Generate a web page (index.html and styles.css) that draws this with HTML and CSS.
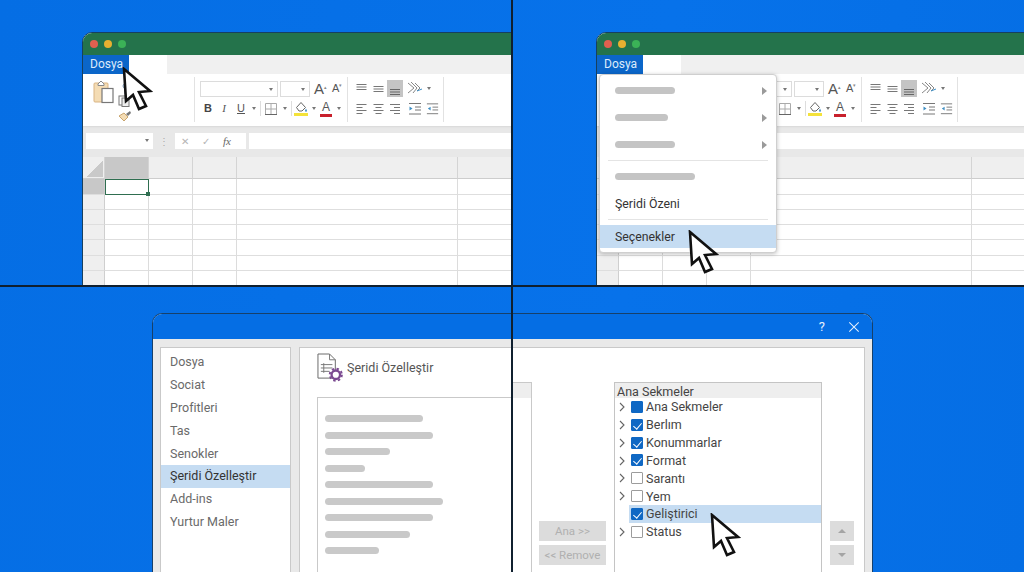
FILE: index.html
```html
<!DOCTYPE html>
<html lang="tr">
<head>
  <meta charset="UTF-8">
  <title>Geliştirici sekmesini açma</title>
  <meta name="viewport" content="width=device-width, initial-scale=1.0" />
  <link rel="stylesheet" href="styles.css">
</head>
<body>

  <svg class="defs" aria-hidden="true">
    <symbol id="cursor" viewBox="0 0 32 46">
      <path d="M3 2 L5 34 L12 28 L18 42 L25 39 L18 25 L29 24 Z" fill="#fff" stroke="#111" stroke-width="2.6" stroke-linejoin="miter"/>
    </symbol>
    <symbol id="v-top" viewBox="0 0 16 16"><path d="M3 3.5h10M3 6h10M3 8.5h10" stroke="#777" fill="none"/></symbol>
    <symbol id="v-mid" viewBox="0 0 16 16"><path d="M3 5.5h10M3 8h10M3 10.5h10" stroke="#777" fill="none"/></symbol>
    <symbol id="v-bot" viewBox="0 0 16 16"><path d="M3 8.5h10M3 11h10M3 13.5h10" stroke="#666" fill="none"/></symbol>
    <symbol id="a-left" viewBox="0 0 16 16"><path d="M3 3.5h10M3 6.5h6M3 9.5h10M3 12.5h6" stroke="#777" fill="none"/></symbol>
    <symbol id="a-mid" viewBox="0 0 16 16"><path d="M3 3.5h10M5 6.5h6M3 9.5h10M5 12.5h6" stroke="#777" fill="none"/></symbol>
    <symbol id="a-right" viewBox="0 0 16 16"><path d="M3 3.5h10M7 6.5h6M3 9.5h10M7 12.5h6" stroke="#777" fill="none"/></symbol>
    <symbol id="ind-out" viewBox="0 0 16 16"><path d="M2 2.5h12M8 6h6M8 9h6M2 13h12" stroke="#777" fill="none"/><path d="M2.5 5.5l3 2-3 2z" fill="#3f8fc4"/></symbol>
    <symbol id="ind-in" viewBox="0 0 16 16"><path d="M2 2.5h12M8 6h6M8 9h6M2 13h12" stroke="#777" fill="none"/><path d="M6 5.5l-3 2 3 2z" fill="#3f8fc4"/></symbol>
    <symbol id="orient" viewBox="0 0 18 16"><path d="M2 2l6 5-6 5M5 1l6 6-4 5M9 2l5 5-3 3" stroke="#888" fill="none"/><path d="M11 10l5-2" stroke="#3f8fc4" fill="none"/></symbol>
    <symbol id="borders" viewBox="0 0 16 16"><path d="M2.5 2.5h11v11h-11zM8 2.5v11M2.5 8h11" stroke="#aaa" fill="none"/><path d="M2 13.5h12" stroke="#666" fill="none"/></symbol>
    <symbol id="fill" viewBox="0 0 16 16"><path d="M8 1.5l4.5 5-3.5 3.5h-3L3.5 6.5z" fill="#fff" stroke="#666"/><path d="M13 7.5l1 2.2a1 1 0 1 1-2 0z" fill="#3f8fc4"/><rect x="1" y="12" width="14" height="3" fill="#f4e23a"/></symbol>
    <symbol id="clip" viewBox="0 0 22 24">
      <rect x="1" y="3" width="14" height="19" rx="1" fill="#f4dcb4" stroke="#d9b483"/>
      <path d="M5 4 L8 1 L11 4 V5.5 H5 Z" fill="#fff" stroke="#888"/>
      <rect x="9" y="8.5" width="11" height="14" fill="#fff" stroke="#777" stroke-width="1.2"/>
    </symbol>
    <symbol id="copy" viewBox="0 0 12 12"><rect x="1" y="1" width="7" height="9" fill="#fff" stroke="#777"/><rect x="4" y="3" width="7" height="8.5" fill="#eee" stroke="#777"/></symbol>
    <symbol id="scissors" viewBox="0 0 10 12"><circle cx="5" cy="3" r="2" fill="none" stroke="#7a98b8"/><path d="M5 5v6" stroke="#7a98b8"/></symbol>
    <symbol id="brush" viewBox="0 0 14 12"><path d="M1 6l5-3 4 4-4 4z" fill="#f4dcb4" stroke="#c9a56e"/><path d="M8 4l4-3 1 2-3 3z" fill="#777"/></symbol>
    <symbol id="chev" viewBox="0 0 8 12"><path d="M2 2l4 4-4 4" fill="none" stroke="#666" stroke-width="1.1"/></symbol>
  </svg>

  <main class="stage">
    <div class="top-row">

      <section class="pane">
        <div class="window">
          <div class="titlebar"><i class="dot red"></i><i class="dot yellow"></i><i class="dot green"></i></div>
          <div class="tabs"><span class="tab-file">Dosya</span><span class="tab-home"></span></div>
          <div class="ribbon">
            <div class="group group-clip">
              <svg class="ic-clip"><use href="#clip"/></svg>
              <div class="clip-small">
                <svg class="ic-s"><use href="#scissors"/></svg>
                <svg class="ic-c"><use href="#copy"/></svg>
                <svg class="ic-b"><use href="#brush"/></svg>
              </div>
            </div>
            <div class="group group-font">
              <div class="rb-row">
                <span class="combo combo-font"><i class="caret"></i></span>
                <span class="combo combo-size"><i class="caret"></i></span>
                <span class="grow-a">A<sup>▴</sup></span>
                <span class="shrink-a">A<sup>▾</sup></span>
              </div>
              <div class="rb-row">
                <span class="tb tb-b">B</span>
                <span class="tb tb-i">I</span>
                <span class="tb tb-u">U</span>
                <i class="caret cell"></i>
                <i class="rb-sep"></i>
                <svg class="ic w20"><use href="#borders"/></svg>
                <i class="caret cell"></i>
                <i class="rb-sep"></i>
                <svg class="ic w18"><use href="#fill"/></svg>
                <i class="caret cell"></i>
                <span class="tb tb-color">A</span>
                <i class="caret cell"></i>
              </div>
            </div>
            <div class="group group-align">
              <div class="rb-row">
                <svg class="ic w17"><use href="#v-top"/></svg>
                <svg class="ic w17"><use href="#v-mid"/></svg>
                <span class="sel-icon"><svg class="ic w16"><use href="#v-bot"/></svg></span>
                <svg class="ic w20 gap"><use href="#orient"/></svg>
                <i class="caret cell"></i>
              </div>
              <div class="rb-row">
                <svg class="ic w17"><use href="#a-left"/></svg>
                <svg class="ic w17"><use href="#a-mid"/></svg>
                <svg class="ic w16"><use href="#a-right"/></svg>
                <svg class="ic w20 gap"><use href="#ind-out"/></svg>
                <svg class="ic w15"><use href="#ind-in"/></svg>
              </div>
            </div>
          </div>
          <div class="formula">
            <span class="namebox"><i class="caret"></i></span>
            <span class="grip">⋮</span>
            <span class="fxbox"><span class="fx-x">✕</span><span class="fx-ok">✓</span><span class="fx">fx</span></span>
            <span class="fxinput"></span>
          </div>
          <table class="sheet">
            <tr class="head"><th class="corner"></th><th class="on"></th><th></th><th></th><th></th><th></th></tr>
            <tr class="tall"><th class="on"></th><td class="active"></td><td></td><td></td><td></td><td></td></tr>
            <tr><th></th><td></td><td></td><td></td><td></td><td></td></tr>
            <tr><th></th><td></td><td></td><td></td><td></td><td></td></tr>
            <tr><th></th><td></td><td></td><td></td><td></td><td></td></tr>
            <tr class="tall"><th></th><td></td><td></td><td></td><td></td><td></td></tr>
            <tr><th></th><td></td><td></td><td></td><td></td><td></td></tr>
            <tr><th></th><td></td><td></td><td></td><td></td><td></td></tr>
          </table>
        </div>
        <svg class="cursor cursor-1"><use href="#cursor"/></svg>
      </section>

      <section class="pane pane-right">
        <div class="window">
          <div class="titlebar"><i class="dot red"></i><i class="dot yellow"></i><i class="dot green"></i></div>
          <div class="tabs"><span class="tab-file">Dosya</span><span class="tab-home"></span></div>
          <div class="ribbon">
            <div class="group group-clip"></div>
            <div class="group group-font">
              <div class="rb-row">
                <span class="combo combo-font"><i class="caret"></i></span>
                <span class="combo combo-size"><i class="caret"></i></span>
                <span class="grow-a">A<sup>▴</sup></span>
                <span class="shrink-a">A<sup>▾</sup></span>
              </div>
              <div class="rb-row">
                <span class="tb tb-b">B</span>
                <span class="tb tb-i">I</span>
                <span class="tb tb-u">U</span>
                <i class="caret cell"></i>
                <i class="rb-sep"></i>
                <svg class="ic w20"><use href="#borders"/></svg>
                <i class="caret cell"></i>
                <i class="rb-sep"></i>
                <svg class="ic w18"><use href="#fill"/></svg>
                <i class="caret cell"></i>
                <span class="tb tb-color">A</span>
                <i class="caret cell"></i>
              </div>
            </div>
            <div class="group group-align">
              <div class="rb-row">
                <svg class="ic w17"><use href="#v-top"/></svg>
                <svg class="ic w17"><use href="#v-mid"/></svg>
                <span class="sel-icon"><svg class="ic w16"><use href="#v-bot"/></svg></span>
                <svg class="ic w20 gap"><use href="#orient"/></svg>
                <i class="caret cell"></i>
              </div>
              <div class="rb-row">
                <svg class="ic w17"><use href="#a-left"/></svg>
                <svg class="ic w17"><use href="#a-mid"/></svg>
                <svg class="ic w16"><use href="#a-right"/></svg>
                <svg class="ic w20 gap"><use href="#ind-out"/></svg>
                <svg class="ic w15"><use href="#ind-in"/></svg>
              </div>
            </div>
          </div>
          <div class="formula">
            <span class="namebox"></span>
            <span class="fxinput"></span>
          </div>
          <table class="sheet">
            <tr class="head"><th class="corner"></th><th></th><th></th><th></th><th></th><th></th></tr>
            <tr class="tall"><th></th><td></td><td></td><td></td><td></td><td></td></tr>
            <tr><th></th><td></td><td></td><td></td><td></td><td></td></tr>
            <tr><th></th><td></td><td></td><td></td><td></td><td></td></tr>
            <tr><th></th><td></td><td></td><td></td><td></td><td></td></tr>
            <tr class="tall"><th></th><td></td><td></td><td></td><td></td><td></td></tr>
            <tr><th></th><td></td><td></td><td></td><td></td><td></td></tr>
            <tr><th></th><td></td><td></td><td></td><td></td><td></td></tr>
          </table>
        </div>

        <div class="menu">
          <div class="menu-item"><i class="bar w60"></i><i class="arrow"></i></div>
          <div class="menu-item"><i class="bar w53"></i><i class="arrow"></i></div>
          <div class="menu-item"><i class="bar w60"></i><i class="arrow"></i></div>
          <hr class="menu-sep">
          <div class="menu-item"><i class="bar w80"></i></div>
          <div class="menu-item menu-text">Şeridi Özeni</div>
          <hr class="menu-sep">
          <div class="menu-item menu-text menu-on">Seçenekler</div>
        </div>
        <svg class="cursor cursor-2"><use href="#cursor"/></svg>
      </section>
    </div>

    <section class="bottom-row">
      <div class="dialog">
        <div class="dialog-title">
          <span class="help">?</span>
          <svg class="close" viewBox="0 0 14 14"><path d="M1.5 1.5l11 11M12.5 1.5l-11 11" stroke="#e6f0fc" stroke-width="1.2" fill="none"/></svg>
        </div>
        <div class="dialog-body">
          <ul class="cats">
            <li>Dosya</li>
            <li>Sociat</li>
            <li>Profitleri</li>
            <li>Tas</li>
            <li>Senokler</li>
            <li class="on">Şeridi Özelleştir</li>
            <li>Add-ins</li>
            <li>Yurtur Maler</li>
          </ul>
          <div class="panel">
            <div class="panel-head">
              <svg class="panel-icon" viewBox="0 0 28 30">
                <path d="M1 1h12l6 6v19H1z" fill="#fff" stroke="#666"/>
                <path d="M13 1v6h6M4 12h12M4 15.5h12M4 19h9M7 10.5v10" stroke="#777" fill="none"/>
                <circle cx="19.5" cy="22.5" r="4.4" fill="#fff" stroke="#7b4a91" stroke-width="2.4"/>
                <circle cx="19.5" cy="22.5" r="6.3" fill="none" stroke="#7b4a91" stroke-width="2" stroke-dasharray="2.5 2.45"/>
              </svg>
              <span>Şeridi Özelleştir</span>
            </div>
            <div class="columns">
              <div class="left-list">
                <div class="left-box">
                  <i class="line l98"></i>
                  <i class="line l108"></i>
                  <i class="line l65"></i>
                  <i class="line l40"></i>
                  <i class="line l108"></i>
                  <i class="line l118"></i>
                  <i class="line l108"></i>
                  <i class="line l85"></i>
                  <i class="line l54"></i>
                </div>
                <div class="left-tail"><div class="tail-head"></div></div>
              </div>
              <div class="move-btns">
                <button class="btn" type="button">Ana &gt;&gt;</button>
                <button class="btn" type="button">&lt;&lt; Remove</button>
              </div>
              <div class="tree">
                <div class="tree-head">Ana Sekmeler</div>
                <div class="tree-row"><svg class="chev"><use href="#chev"/></svg><i class="cb solid"></i>Ana Sekmeler</div>
                <div class="tree-row"><svg class="chev"><use href="#chev"/></svg><i class="cb on"></i>Berlım</div>
                <div class="tree-row"><svg class="chev"><use href="#chev"/></svg><i class="cb on"></i>Konummarlar</div>
                <div class="tree-row"><svg class="chev"><use href="#chev"/></svg><i class="cb on"></i>Format</div>
                <div class="tree-row"><svg class="chev"><use href="#chev"/></svg><i class="cb"></i>Sarantı</div>
                <div class="tree-row"><svg class="chev"><use href="#chev"/></svg><i class="cb"></i>Yem</div>
                <div class="tree-row tree-on"><i class="cb on"></i>Geliştirici</div>
                <div class="tree-row"><svg class="chev"><use href="#chev"/></svg><i class="cb"></i>Status</div>
              </div>
              <div class="order-btns">
                <button class="btn-sq" type="button"><i class="tri-up"></i></button>
                <button class="btn-sq" type="button"><i class="tri-down"></i></button>
              </div>
            </div>
          </div>
        </div>
      </div>
      <svg class="cursor cursor-3"><use href="#cursor"/></svg>
    </section>

    <div class="divider"></div>
  </main>

</body>
</html>
```

FILE: styles.css
```css
* {
  box-sizing: border-box;
}

body {
  margin: 0;
  font-family: Roboto, 'Noto Sans', sans-serif;
  background-color: #056fe6;
  overflow: hidden;
}

i {
  display: block;
  font-style: normal;
}

.defs {
  display: none;
}

.stage {
  position: relative;
  width: 1024px;
  height: 572px;
  overflow: hidden;
  background: linear-gradient(100deg, #056ee4, #0772ea 60%, #056ee4);
}

.divider {
  position: absolute;
  left: 511px;
  top: 0;
  width: 2px;
  height: 572px;
  background: #10202f;
}

.top-row {
  display: flex;
  height: 287px;
  border-bottom: 2px solid #10202f;
}

.pane {
  position: relative;
  width: 513px;
  padding: 32px 0 0 82px;
  overflow: hidden;
}

.pane-right {
  width: 511px;
  padding-left: 83px;
}

/* excel window */
.window {
  width: 640px;
  height: 300px;
  background: #fff;
  border: 1.5px solid #17405f;
  border-radius: 10px 10px 0 0;
  overflow: hidden;
}

.titlebar {
  display: flex;
  align-items: center;
  gap: 6px;
  height: 22px;
  padding-left: 7px;
  background-color: #24734b;
}

.dot {
  width: 8px;
  height: 8px;
  border-radius: 50%;
}

.red { background-color: #e0604f; }
.yellow { background-color: #e8b030; }
.green { background-color: #3bb257; }

.tabs {
  display: flex;
  height: 19px;
  background-color: #f0f0f0;
}

.tab-file {
  width: 46px;
  padding: 1px 0 0 7px;
  font-size: 12px;
  line-height: 17px;
  color: #dcebfb;
  background-color: #0b66c9;
}

.tab-home {
  width: 38px;
  background-color: #fff;
}

.ribbon {
  display: flex;
  height: 52px;
  padding: 3px 0 4px;
  background-color: #fff;
}

.group {
  padding-top: 3px;
  border-right: 1px solid #e2e2e2;
}

.group-clip {
  position: relative;
  width: 112px;
  flex: none;
}

.ic-clip {
  display: block;
  width: 22px;
  height: 24px;
  margin: 0 0 0 10px;
}

.clip-small svg {
  position: absolute;
}

.ic-s { left: 37px; top: 6px; width: 10px; height: 12px; }
.ic-c { left: 35px; top: 18px; width: 12px; height: 12px; }
.ic-b { left: 35px; top: 33px; width: 14px; height: 12px; }

.group-font {
  width: 153px;
  flex: none;
  padding-left: 5px;
}

.group-align {
  width: 96px;
  flex: none;
  padding-left: 5px;
}

.rb-row {
  display: flex;
  align-items: center;
  height: 17px;
  margin-bottom: 3px;
}

.combo {
  position: relative;
  height: 16px;
  border: 1px solid #dcdcdc;
  background: #fff;
  margin-right: 2px;
}

.combo-font { width: 78px; }
.combo-size { width: 30px; }

.caret {
  width: 0;
  height: 0;
  border-left: 2px solid transparent;
  border-right: 2px solid transparent;
  border-top: 3px solid #777;
}

.combo .caret,
.namebox .caret {
  position: absolute;
  right: 4px;
  top: 6px;
}

.caret.cell {
  flex: none;
  margin: 0 1px 0 2px;
}

.rb-sep {
  width: 1px;
  height: 15px;
  margin-left: 3px;
  background-color: #ddd;
  flex: none;
}

.grow-a,
.shrink-a {
  color: #555;
  font-family: 'Liberation Sans', sans-serif;
  line-height: 17px;
}

.grow-a {
  font-size: 15px;
  margin-left: 2px;
  width: 17px;
}

.shrink-a {
  font-size: 11px;
  margin-left: 1px;
}

.grow-a sup,
.shrink-a sup {
  font-size: 5px;
  vertical-align: 5px;
  line-height: 0;
  color: #888;
}

.tb {
  flex: none;
  width: 16px;
  font-family: 'Liberation Sans', sans-serif;
  font-size: 11px;
  line-height: 17px;
  text-align: center;
  color: #555;
}

.tb-b {
  font-weight: bold;
  color: #444;
}

.tb-i {
  font-style: italic;
  font-family: 'Liberation Serif', serif;
}

.tb-u {
  width: 18px;
  text-decoration: underline;
}

.tb-color {
  width: 12px;
  height: 17px;
  margin: 0 3px;
  font-size: 12px;
  line-height: 14px;
  border-bottom: 3px solid #c8202c;
}

.ic {
  flex: none;
  height: 16px;
}

.w15 { width: 15px; }
.w16 { width: 16px; }
.w17 { width: 17px; }
.w18 { width: 18px; }
.w20 { width: 20px; }

.gap {
  margin-left: 2px;
}

.sel-icon {
  display: flex;
  align-items: center;
  height: 17px;
  background-color: #c4c4c4;
}

.formula {
  display: flex;
  align-items: center;
  height: 31px;
  padding: 0 0 1px 3px;
  background-color: #e8e8e8;
  box-shadow: inset 0 2px 2px -1px #d8d8d8;
}

.namebox {
  position: relative;
  width: 67px;
  height: 16px;
  background: #fff;
}

.grip {
  width: 22px;
  font-size: 10px;
  color: #aaa;
  text-align: center;
}

.fxbox {
  display: flex;
  align-items: center;
  width: 71px;
  height: 16px;
  padding-left: 6px;
  font-size: 10px;
  color: #b5b5b5;
  background: #fff;
}

.fx-ok { margin-left: 13px; }

.fx {
  margin-left: 13px;
  font-family: 'Liberation Serif', serif;
  font-style: italic;
  font-size: 11px;
  color: #666;
}

.fxinput {
  flex: 1;
  height: 16px;
  margin-left: 3px;
  background: #fff;
}

.sheet {
  table-layout: fixed;
  width: 640px;
  border-collapse: separate;
  border-spacing: 0;
}

.sheet th,
.sheet td {
  height: 15px;
  padding: 0;
  border-right: 1px solid #dcdcdc;
  border-bottom: 1px solid #dedede;
  background-color: #fff;
}

.sheet .tall th,
.sheet .tall td {
  height: 16px;
}

.sheet th {
  background-color: #efefef;
  border-right: 1px solid #cfcfcf;
}

.sheet .head th {
  height: 22px;
  width: 44px;
  border-bottom: 1px solid #cdcdcd;
  border-right: 1px solid #d4d4d4;
  background-color: #efefef;
}

.sheet .head th.corner {
  width: 22px;
  background: linear-gradient(to bottom right, transparent 50%, #c9c9c9 50%) right 1px bottom 1px / 16px 16px no-repeat, #efefef;
}

.sheet .head th:nth-child(5) {
  width: 221px;
}

.sheet .head th:last-child {
  width: auto;
}

.sheet th.on,
.sheet .head th.on {
  background-color: #c8c8c8;
}

.sheet td.active {
  position: relative;
  outline: 1.5px solid #2f6e50;
  outline-offset: -1px;
}

.sheet td.active::after {
  content: "";
  position: absolute;
  right: -2px;
  bottom: -2px;
  width: 4px;
  height: 4px;
  background-color: #2f6e50;
}

.cursor {
  position: absolute;
  width: 32px;
  height: 46px;
}

.cursor-1 { left: 121px; top: 67px; }
.cursor-2 { left: 174px; top: 230px; }
.cursor-3 { left: 709px; top: 226px; }

/* file menu */
.menu {
  position: absolute;
  left: 86px;
  top: 74px;
  width: 178px;
  height: 179px;
  padding-top: 2px;
  background-color: #fff;
  border: 1px solid #cfcfcf;
  border-radius: 4px;
  box-shadow: 0 1px 4px rgba(0, 0, 0, 0.25);
  overflow: hidden;
}

.menu-item {
  display: flex;
  align-items: center;
  justify-content: space-between;
  height: 27px;
  padding: 0 9px 0 15px;
}

.menu-text {
  font-size: 12.3px;
  color: #333;
}

.menu-on {
  height: 23px;
  margin-top: 5px;
  background-color: #c5dcf2;
}

.menu-sep {
  height: 1px;
  margin: 2px 8px;
  border: 0;
  background-color: #e4e4e4;
}

.bar {
  height: 7px;
  border-radius: 4px;
  background-color: #c4c4c4;
}

.w60 { width: 60px; }
.w53 { width: 53px; }
.w80 { width: 80px; }

.arrow {
  border-left: 5px solid #9a9a9a;
  border-top: 4px solid transparent;
  border-bottom: 4px solid transparent;
}

/* options dialog */
.bottom-row {
  position: relative;
  height: 285px;
  padding: 26px 0 0 152px;
  overflow: hidden;
}

.dialog {
  width: 721px;
  height: 300px;
  background-color: #e9e9e9;
  border: 1.5px solid #17406a;
  border-bottom: 0;
  border-radius: 10px 10px 0 0;
  overflow: hidden;
}

.dialog-title {
  display: flex;
  align-items: center;
  justify-content: flex-end;
  gap: 23px;
  height: 25px;
  padding-right: 12px;
  background-color: #056ee4;
  color: #e6f0fc;
}

.help {
  font-size: 13px;
}

.close {
  width: 12px;
  height: 12px;
}

.dialog-body {
  display: flex;
  gap: 8px;
  padding: 8px 7px 0;
}

.cats {
  width: 131px;
  height: 260px;
  margin: 0;
  padding: 3px 0 0;
  list-style: none;
  background-color: #fff;
  border: 1px solid #c9c9c9;
}

.cats li {
  height: 22.9px;
  padding-left: 9px;
  font-size: 12.5px;
  line-height: 22px;
  color: #6a6a6a;
}

.cats li.on {
  background-color: #c5dcf2;
  color: #333;
}

.panel {
  flex: 1;
  height: 260px;
  padding: 5px 0 0 17px;
  background-color: #fff;
  border: 1px solid #c9c9c9;
}

.panel-head {
  display: flex;
  align-items: center;
  gap: 3px;
  height: 29px;
  font-size: 12.5px;
  color: #555;
}

.panel-icon {
  width: 27px;
  height: 29px;
}

.columns {
  display: flex;
}

.left-list {
  display: flex;
  width: 215px;
  height: 200px;
}

.left-box {
  display: flex;
  flex-direction: column;
  gap: 9.5px;
  width: 195px;
  height: 200px;
  margin-top: 15px;
  padding: 17px 0 0 7px;
  border: 1px solid #c9c9c9;
  border-right: 0;
}

.left-tail {
  flex: 1;
  border: 1px solid #c9c9c9;
  border-left: 0;
}

.tail-head {
  height: 15px;
  background-color: #eee;
}

.line {
  height: 7px;
  border-radius: 4px;
  background-color: #c9c9c9;
}

.l98 { width: 98px; }
.l108 { width: 108px; }
.l65 { width: 65px; }
.l40 { width: 40px; }
.l118 { width: 118px; }
.l85 { width: 85px; }
.l54 { width: 54px; }

.move-btns {
  display: flex;
  flex-direction: column;
  gap: 4px;
  width: 82px;
  padding: 139px 8px 0 7px;
}

.btn {
  height: 20px;
  padding: 0;
  border: 0;
  background-color: #dcdcdc;
  color: #b0b0b0;
  font-family: inherit;
  font-size: 11.5px;
}

.tree {
  width: 208px;
  height: 200px;
  border: 1px solid #c4c4c4;
}

.tree-head {
  height: 15px;
  padding-left: 2px;
  font-size: 12.5px;
  line-height: 17px;
  color: #444;
  background-color: #eee;
}

.tree-row {
  display: flex;
  align-items: center;
  height: 17.85px;
  padding-left: 16px;
  position: relative;
  font-size: 12.5px;
  color: #444;
}

.tree-on {
  margin-left: 14px;
  padding-left: 2px;
  background-color: #c5dcf2;
}

.chev {
  position: absolute;
  left: 3px;
  top: 3px;
  width: 8px;
  height: 12px;
}

.cb {
  position: relative;
  flex: none;
  width: 12px;
  height: 12px;
  margin-right: 3px;
  border: 1px solid #9c9c9c;
  border-radius: 1px;
  background-color: #fff;
}

.cb.solid,
.cb.on {
  border-color: #0f68c4;
  background-color: #0f68c4;
}

.cb.on::after {
  content: "";
  position: absolute;
  left: 3px;
  top: 1px;
  width: 4px;
  height: 7px;
  border-right: 1.5px solid #fff;
  border-bottom: 1.5px solid #fff;
  transform: rotate(40deg);
}

.order-btns {
  display: flex;
  flex-direction: column;
  gap: 4px;
  padding: 139px 0 0 8px;
}

.btn-sq {
  display: flex;
  align-items: center;
  justify-content: center;
  width: 24px;
  height: 20px;
  padding: 0;
  border: 0;
  background-color: #dcdcdc;
}

.tri-up {
  border-left: 4px solid transparent;
  border-right: 4px solid transparent;
  border-bottom: 4px solid #a4a4a4;
}

.tri-down {
  border-left: 4px solid transparent;
  border-right: 4px solid transparent;
  border-top: 4px solid #a4a4a4;
}
```
